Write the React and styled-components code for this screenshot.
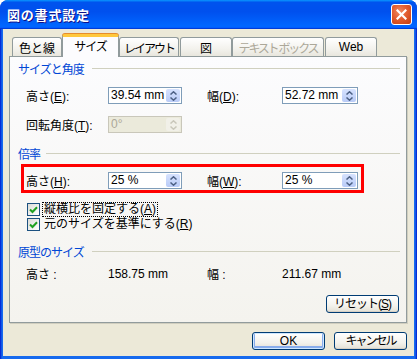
import React from 'react';
import styled, { createGlobalStyle } from 'styled-components';

const GlobalStyle = createGlobalStyle`
  html, body {
    margin: 0;
    padding: 0;
    background: #ffffff;
  }
  body {
    font-family: "Liberation Sans", "Noto Sans CJK JP", sans-serif;
    font-size: 12px;
    color: #000;
  }
`;

const Window = styled.div`
  width: 417px;
  height: 359px;
  display: flex;
  flex-direction: column;
  border-radius: 8px 8px 0 0;
  overflow: hidden;
  background: #0a46d8;
`;

const TitleBar = styled.div`
  height: 29px;
  flex: none;
  display: flex;
  align-items: center;
  justify-content: space-between;
  padding: 0 5px 0 7px;
  background: linear-gradient(180deg, #0997ff, #0053ee 8%, #0050ee 40%, #0066ff 88%, #0066ff 93%, #005bff 95%, #003dd7 96%, #003dd7);
`;

const Title = styled.span`
  color: #fff;
  font-family: "Noto Sans CJK JP", sans-serif;
  font-weight: 700;
  font-size: 13px;
  letter-spacing: 0.8px;
  text-shadow: 1px 1px 0 #0f1089;
`;

const CloseButton = styled.span`
  width: 21px;
  height: 21px;
  box-sizing: border-box;
  border: 1px solid #fff;
  border-radius: 3px;
  background: radial-gradient(circle at 40% 35%, #f08a63 0%, #e25d30 45%, #c43c10 100%);
  display: flex;
  align-items: center;
  justify-content: center;
`;

const Frame = styled.div`
  flex: 1;
  display: flex;
  padding: 0 3px 3px 3px;
  background: linear-gradient(90deg, #0019cf 0, #166aee 2px, #166aee calc(100% - 2px), #0019cf 100%);
`;

const Body = styled.div`
  flex: 1;
  display: flex;
  flex-direction: column;
  background: #ece9d8;
  padding: 5px 7px 0 6px;
`;

const TabRow = styled.div`
  position: relative;
  z-index: 1;
  display: flex;
  align-items: flex-end;
  height: 22px;
  padding-left: 3px;
`;

const Tab = styled.div`
  width: ${p => p.$w}px;
  height: ${p => (p.$active ? 23 : 19)}px;
  margin-bottom: ${p => (p.$active ? -1 : 0)}px;
  margin-left: ${p => p.$gap || 0}px;
  box-sizing: border-box;
  border: 1px solid #919b9c;
  border-bottom: none;
  border-top: ${p => (p.$active ? '3px solid #ffc83c' : '1px solid #919b9c')};
  border-radius: 3px 3px 0 0;
  background: ${p => (p.$active ? '#fcfcfe' : 'linear-gradient(180deg, #ffffff 0%, #f3f2ed 60%, #e8e6dd 100%)')};
  box-shadow: ${p => (p.$active ? '0 -1px 0 #e68b2c' : 'none')};
  color: ${p => (p.$disabled ? '#aca899' : '#000')};
  letter-spacing: ${p => p.$ls || 0}px;
  display: flex;
  align-items: center;
  justify-content: center;
  padding-bottom: ${p => (p.$active ? 3 : 0)}px;
  white-space: nowrap;
`;

const Panel = styled.div`
  height: 267px;
  flex: none;
  box-sizing: border-box;
  border: 1px solid #919b9c;
  background: linear-gradient(180deg, #fcfcfe 0%, #f4f3ee 100%);
  box-shadow: 1px 1px 0 #d0cebf;
  display: flex;
  flex-direction: column;
  padding-top: 4px;
`;

const SectionTitle = styled.div`
  display: flex;
  align-items: center;
  height: 14px;
  margin: ${p => p.$mt || 0}px 6px 0 8px;
  color: #0046d5;
  letter-spacing: -1px;
  white-space: nowrap;

  &::after {
    content: '';
    flex: 1;
    height: 1px;
    background: #d0d0bf;
    margin-left: ${p => p.$gap || 8}px;
  }
`;

const FieldRow = styled.div`
  display: grid;
  grid-template-columns: 82px 99px 75px 76px;
  align-items: center;
  height: ${p => p.$h || 17}px;
  margin-top: ${p => p.$mt || 0}px;
  padding-left: ${p => (p.$pl === undefined ? 16 : p.$pl)}px;
  white-space: nowrap;
`;

const Label = styled.span`
  color: #000;
`;

const SpinBox = styled.div`
  display: flex;
  width: ${p => p.$w}px;
  height: 17px;
  box-sizing: border-box;
  border: 1px solid ${p => (p.$disabled ? '#c9c7ba' : '#7f9db9')};
  background: ${p => (p.$disabled ? '#ebeadb' : '#fff')};
  padding: 1px;
`;

const SpinValue = styled.span`
  flex: 1;
  padding-left: 1px;
  line-height: 13px;
  color: ${p => (p.$disabled ? '#aca899' : '#000')};
`;

const SpinButton = styled.span`
  width: 14px;
  border-radius: 2px;
  background: ${p => (p.$disabled ? '#f1f0e8' : 'linear-gradient(180deg, #d6e2fe 0%, #b9cbf7 100%)')};
  display: flex;
  flex-direction: column;
  align-items: center;
  justify-content: center;
  gap: 2px;
`;

const Highlight = styled.div`
  margin: 4px 0 0 11px;
  width: 343px;
  box-sizing: border-box;
  border: 3px solid #ff0000;
  padding: 5px 0 1px 0;
`;

const CheckRow = styled.div`
  display: flex;
  align-items: center;
  gap: 3px;
  height: 13px;
  margin-top: ${p => p.$mt || 0}px;
  padding-left: 17px;
  white-space: nowrap;
`;

const CheckBox = styled.span`
  width: 13px;
  height: 13px;
  flex: none;
  box-sizing: border-box;
  border: 1px solid #1c5180;
  background: linear-gradient(135deg, #dcdcd7 0%, #ffffff 100%);
  display: flex;
  align-items: center;
  justify-content: center;
`;

const CheckLabel = styled.span`
  line-height: 13px;
  padding: 0 1px;
  margin-left: ${p => (p.$focus ? -1 : 0)}px;
  border: ${p => (p.$focus ? '1px dotted #000' : 'none')};
`;

const ButtonRow = styled.div`
  display: flex;
  justify-content: flex-end;
  gap: ${p => p.$gap || 9}px;
  margin-top: ${p => p.$mt || 0}px;
  padding-right: ${p => p.$pr || 0}px;
`;

const Button = styled.button`
  width: 73px;
  height: 18px;
  box-sizing: border-box;
  border: 1px solid #003c74;
  border-radius: 3px;
  padding: 0;
  background: linear-gradient(180deg, #ffffff 0%, #f3f2ec 60%, #e3e0d5 100%);
  box-shadow: ${p => (p.$default ? 'inset 0 0 0 1px #cee7ff, inset 0 -1px 0 2px #89adec' : 'inset 0 -1px 0 #d6d0c5')};
  font-family: "Liberation Sans", "Noto Sans CJK JP", sans-serif;
  font-size: 12px;
  letter-spacing: ${p => p.$ls || 0}px;
  color: #000;
  line-height: 14px;
`;

const Chevron = ({ up, color }) => (
  <svg width="7" height="4" viewBox="0 0 7 4">
    <polyline
      points={up ? '0.5,3.5 3.5,0.8 6.5,3.5' : '0.5,0.5 3.5,3.2 6.5,0.5'}
      fill="none"
      stroke={color}
      strokeWidth="1.5"
    />
  </svg>
);

const Spin = ({ value, width = 75, disabled }) => (
  <SpinBox $w={width} $disabled={disabled}>
    <SpinValue $disabled={disabled}>{value}</SpinValue>
    <SpinButton $disabled={disabled}>
      <Chevron up color={disabled ? '#c9c7ba' : '#4d6185'} />
      <Chevron color={disabled ? '#c9c7ba' : '#4d6185'} />
    </SpinButton>
  </SpinBox>
);

const Check = () => (
  <CheckBox>
    <svg width="9" height="8" viewBox="0 0 9 8">
      <polyline points="1,3.5 3.5,6 8,1.2" fill="none" stroke="#21a121" strokeWidth="2" />
    </svg>
  </CheckBox>
);

const tabs = [
  { label: '色と線', w: 50 },
  { label: 'サイズ', w: 57, active: true, ls: -1 },
  { label: 'レイアウト', w: 60, ls: -2 },
  { label: '図', w: 52, gap: 1 },
  { label: 'テキスト ボックス', w: 92, disabled: true, ls: -2.2 },
  { label: 'Web', w: 52, gap: 1 },
];

const App = () => (
  <>
    <GlobalStyle />
    <Window>
      <TitleBar>
        <Title>図の書式設定</Title>
        <CloseButton>
          <svg width="11" height="11" viewBox="0 0 11 11">
            <path d="M1.5 1.5 L9.5 9.5 M9.5 1.5 L1.5 9.5" stroke="#fff" strokeWidth="2.2" strokeLinecap="square" />
          </svg>
        </CloseButton>
      </TitleBar>
      <Frame>
        <Body>
          <TabRow>
            {tabs.map(t => (
              <Tab key={t.label} $w={t.w} $gap={t.gap} $ls={t.ls} $active={t.active} $disabled={t.disabled}>
                {t.label}
              </Tab>
            ))}
          </TabRow>
          <Panel>
            <SectionTitle>サイズと角度</SectionTitle>
            <FieldRow $mt={12}>
              <Label>高さ(<u>E</u>):</Label>
              <Spin value="39.54 mm" width={74} />
              <Label>幅(<u>D</u>):</Label>
              <Spin value="52.72 mm" width={76} />
            </FieldRow>
            <FieldRow $mt={12}>
              <Label>回転角度(<u>T</u>):</Label>
              <Spin value="0°" width={74} disabled />
            </FieldRow>

            <SectionTitle $mt={13} $gap={6}>倍率</SectionTitle>
            <Highlight>
              <FieldRow $pl={2}>
                <Label>高さ(<u>H</u>):</Label>
                <Spin value="25 %" width={74} />
                <Label>幅(<u>W</u>):</Label>
                <Spin value="25 %" width={76} />
              </FieldRow>
            </Highlight>
            <CheckRow $mt={10}>
              <Check />
              <CheckLabel $focus>縦横比を固定する(<u>A</u>)</CheckLabel>
            </CheckRow>
            <CheckRow $mt={2}>
              <Check />
              <CheckLabel>元のサイズを基準にする(<u>R</u>)</CheckLabel>
            </CheckRow>

            <SectionTitle $mt={13}>原型のサイズ</SectionTitle>
            <FieldRow $mt={7} $h={14}>
              <Label>高さ :</Label>
              <span>158.75 mm</span>
              <Label>幅 :</Label>
              <span>211.67 mm</span>
            </FieldRow>
            <ButtonRow $mt={16} $pr={7}>
              <Button $ls={-1}>リセット(<u>S</u>)</Button>
            </ButtonRow>
          </Panel>
          <ButtonRow $mt={9}>
            <Button $default>OK</Button>
            <Button $ls={-2}>キャンセル</Button>
          </ButtonRow>
        </Body>
      </Frame>
    </Window>
  </>
);

export default App;
